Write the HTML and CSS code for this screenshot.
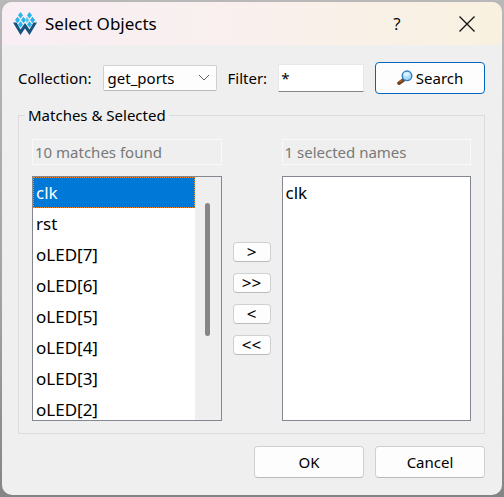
FILE: index.html
```html
<!DOCTYPE html>
<html lang="en">
<head>
<meta charset="utf-8">
<title>Select Objects</title>
<link rel="stylesheet" href="styles.css">
</head>
<body>
<main class="dialog" role="dialog" aria-labelledby="dialog-title">
  <header class="titlebar">
    <svg class="logo" viewBox="0 0 24 24" aria-hidden="true">
      <g fill="#27b5ea">
        <path d="M7.500 0l2.500 3.300-2.500 3.300-2.500-3.300zM16.500 0l2.500 3.300-2.500 3.300-2.500-3.300z"/>
        <path d="M4.500 4.700L7 8l-2.500 3.300L2 8zM10.500 4.700L13 8l-2.500 3.300L8 8zM19.500 4.700L22 8l-2.500 3.300L17 8z"/>
        <path d="M7.500 9.200l2.500 3.300-2.500 3.300-2.500-3.300zM16.500 9.200l2.500 3.300-2.500 3.300-2.500-3.300z"/>
        <path d="M14 4.700L16.300 8 14 11.300 12 8z" fill="#62c9ef"/>
      </g>
      <path d="M0 10.500h3.500l4 7 4.500-6.500 4.500 6.500 4-7H24L16.500 23 12 16.500 7.500 23z" fill="#14527f"/>
    </svg>
    <h1 id="dialog-title">Select Objects</h1>
    <button class="caption help" type="button" aria-label="Help">?</button>
    <button class="caption" type="button" aria-label="Close">
      <svg class="close" viewBox="0 0 16 16" aria-hidden="true"><path d="M.5.5l15 15M15.500.5L.5 15.500"/></svg>
    </button>
  </header>
  <form class="content">
    <div class="query">
      <label for="collection">Collection:</label>
      <div class="combo">
        <select id="collection"><option>get_ports</option></select>
        <svg class="chevron" viewBox="0 0 12 7" aria-hidden="true"><path d="M1 1l5 5 5-5"/></svg>
      </div>
      <label for="filter">Filter:</label>
      <input id="filter" class="filter" type="text" value="*">
      <button class="button search" type="button">
        <svg class="lens" viewBox="0 0 16 16" aria-hidden="true">
          <path d="M7 9.500l-5 3.700" stroke="#70401c" stroke-width="3.600" stroke-linecap="round"/>
          <path d="M5 10l-2.500 1.900" stroke="#a66a35" stroke-width="1.200"/>
          <circle cx="10" cy="5.800" r="4.800" fill="#a9dcfa" stroke="#347fc0" stroke-width="1.400"/>
          <ellipse cx="9.500" cy="4.300" rx="2.800" ry="2" fill="#dcf3ff"/>
        </svg>
        Search
      </button>
    </div>
    <fieldset class="group">
      <legend>Matches &amp; Selected</legend>
      <div class="transfer">
        <div class="pane">
          <input class="status" type="text" value="10 matches found" aria-label="Match count" disabled>
          <div class="listframe">
            <select class="list" size="8" multiple aria-label="Matches">
              <option selected>clk</option>
              <option>rst</option>
              <option>oLED[7]</option>
              <option>oLED[6]</option>
              <option>oLED[5]</option>
              <option>oLED[4]</option>
              <option>oLED[3]</option>
              <option>oLED[2]</option>
            </select>
            <div class="track"><div class="thumb"></div></div>
          </div>
        </div>
        <div class="moves">
          <button class="button move" type="button" aria-label="Add">&gt;</button>
          <button class="button move" type="button" aria-label="Add all">&gt;&gt;</button>
          <button class="button move" type="button" aria-label="Remove">&lt;</button>
          <button class="button move" type="button" aria-label="Remove all">&lt;&lt;</button>
        </div>
        <div class="pane">
          <input class="status" type="text" value="1 selected names" aria-label="Selected count" disabled>
          <div class="listframe">
            <select class="list" size="8" multiple aria-label="Selected">
              <option>clk</option>
            </select>
          </div>
        </div>
      </div>
    </fieldset>
    <footer class="actions">
      <button class="button" type="button">OK</button>
      <button class="button" type="button">Cancel</button>
    </footer>
  </form>
</main>
</body>
</html>
```
FILE: styles.css
```css
* {
  box-sizing: border-box;
}

body {
  margin: 0;
  padding: 2px;
  min-height: 100vh;
  background: linear-gradient(#b8b8b8, #a2a2a2 60%, #858585);
  color: #000;
  font: 15px/20px "Noto Sans", "Open Sans", sans-serif;
}

button,
input,
select {
  margin: 0;
  font: inherit;
  color: inherit;
}

.dialog {
  overflow: hidden;
  border-radius: 10px;
  background: #efefef;
}

.titlebar {
  display: flex;
  align-items: center;
  height: 43px;
  padding-left: 11px;
  background: linear-gradient(90deg, #f8eef4, #f9f0ee 50%, #f9f1df);
}

.logo {
  width: 24px;
  height: 24px;
  margin-right: 8px;
}

.titlebar h1 {
  flex: 1;
  margin: 0;
  font-size: 17px;
  font-weight: 400;
  line-height: 20px;
}

.caption {
  display: grid;
  place-items: center;
  width: 70px;
  height: 43px;
  padding: 0;
  border: 0;
  background: none;
}

.help {
  font-family: "Open Sans", sans-serif;
  font-size: 17px;
}

.close {
  width: 16px;
  height: 16px;
  fill: none;
  stroke: #111;
  stroke-width: 1.3;
}

.content {
  padding: 17px 17px 17px 16px;
}

.query {
  display: flex;
  align-items: center;
  gap: 11px;
}

.combo {
  position: relative;
  flex: 1 1 114px;
}

.combo select {
  appearance: none;
  display: block;
  width: 100%;
  height: 26px;
  padding: 0 4px;
  border: 1px solid #d0d0d0;
  border-bottom-color: #bbb;
  border-radius: 2px;
  background: #fdfdfd;
}

.chevron {
  position: absolute;
  top: 9px;
  right: 7px;
  width: 12px;
  height: 7px;
  fill: none;
  stroke: #606060;
  pointer-events: none;
}

.filter {
  flex: 1 1 86px;
  width: 86px;
  min-width: 0;
  height: 28px;
  padding: 0 2px;
  border: 1px solid #e8e8e8;
  border-bottom-color: #868686;
  background: #fff;
}

.button {
  display: flex;
  align-items: center;
  justify-content: center;
  width: 110px;
  height: 32px;
  padding: 0;
  border: 1px solid #d0d0d0;
  border-bottom-color: #bbb;
  border-radius: 4px;
  background: #fdfdfd;
}

.search {
  gap: 3px;
  border-color: #0067c0;
}

.lens {
  width: 16px;
  height: 16px;
  fill: none;
}

.group {
  min-width: 0;
  margin: 11px 0 0;
  padding: 14px 13px 12px;
  border: 1px solid #dcdcdc;
}

.group legend {
  margin-left: -7px;
  padding: 0 3px;
}

.transfer {
  display: grid;
  grid-template-columns: 1fr 38px 1fr;
  gap: 11px;
}

.pane {
  display: grid;
  gap: 11px;
  min-width: 0;
}

.status {
  width: 100%;
  height: 26px;
  padding: 0 2px;
  border: 1px solid #f9f9f9;
  background: #efefef;
  color: #787878;
}

.listframe {
  display: flex;
  height: 245px;
  border: 1px solid #828790;
  background: #fff;
}

.list {
  flex: 1;
  min-width: 0;
  height: 100%;
  padding: 0;
  overflow: hidden;
  border: 0;
  border-radius: 0;
  outline: 0;
  background: #fff;
  font-size: 17px;
}

.list option {
  height: 31px;
  padding: 4px 3px 0;
}

.list option:checked {
  outline: 1px dotted #f08a28;
  outline-offset: -1px;
  background: linear-gradient(#0078d7, #0078d7);
  -webkit-text-fill-color: #fff;
}

.track {
  width: 26px;
  padding: 26px 11px 0 10px;
  background: #efefef;
}

.thumb {
  height: 133px;
  border-radius: 3px;
  background: #868686;
}

.moves {
  display: grid;
  align-content: center;
  gap: 11px;
  padding-top: 36px;
}

.move {
  width: 38px;
  height: 20px;
  font-size: 17px;
}

.actions {
  display: flex;
  justify-content: flex-end;
  gap: 11px;
  margin-top: 12px;
}
```
